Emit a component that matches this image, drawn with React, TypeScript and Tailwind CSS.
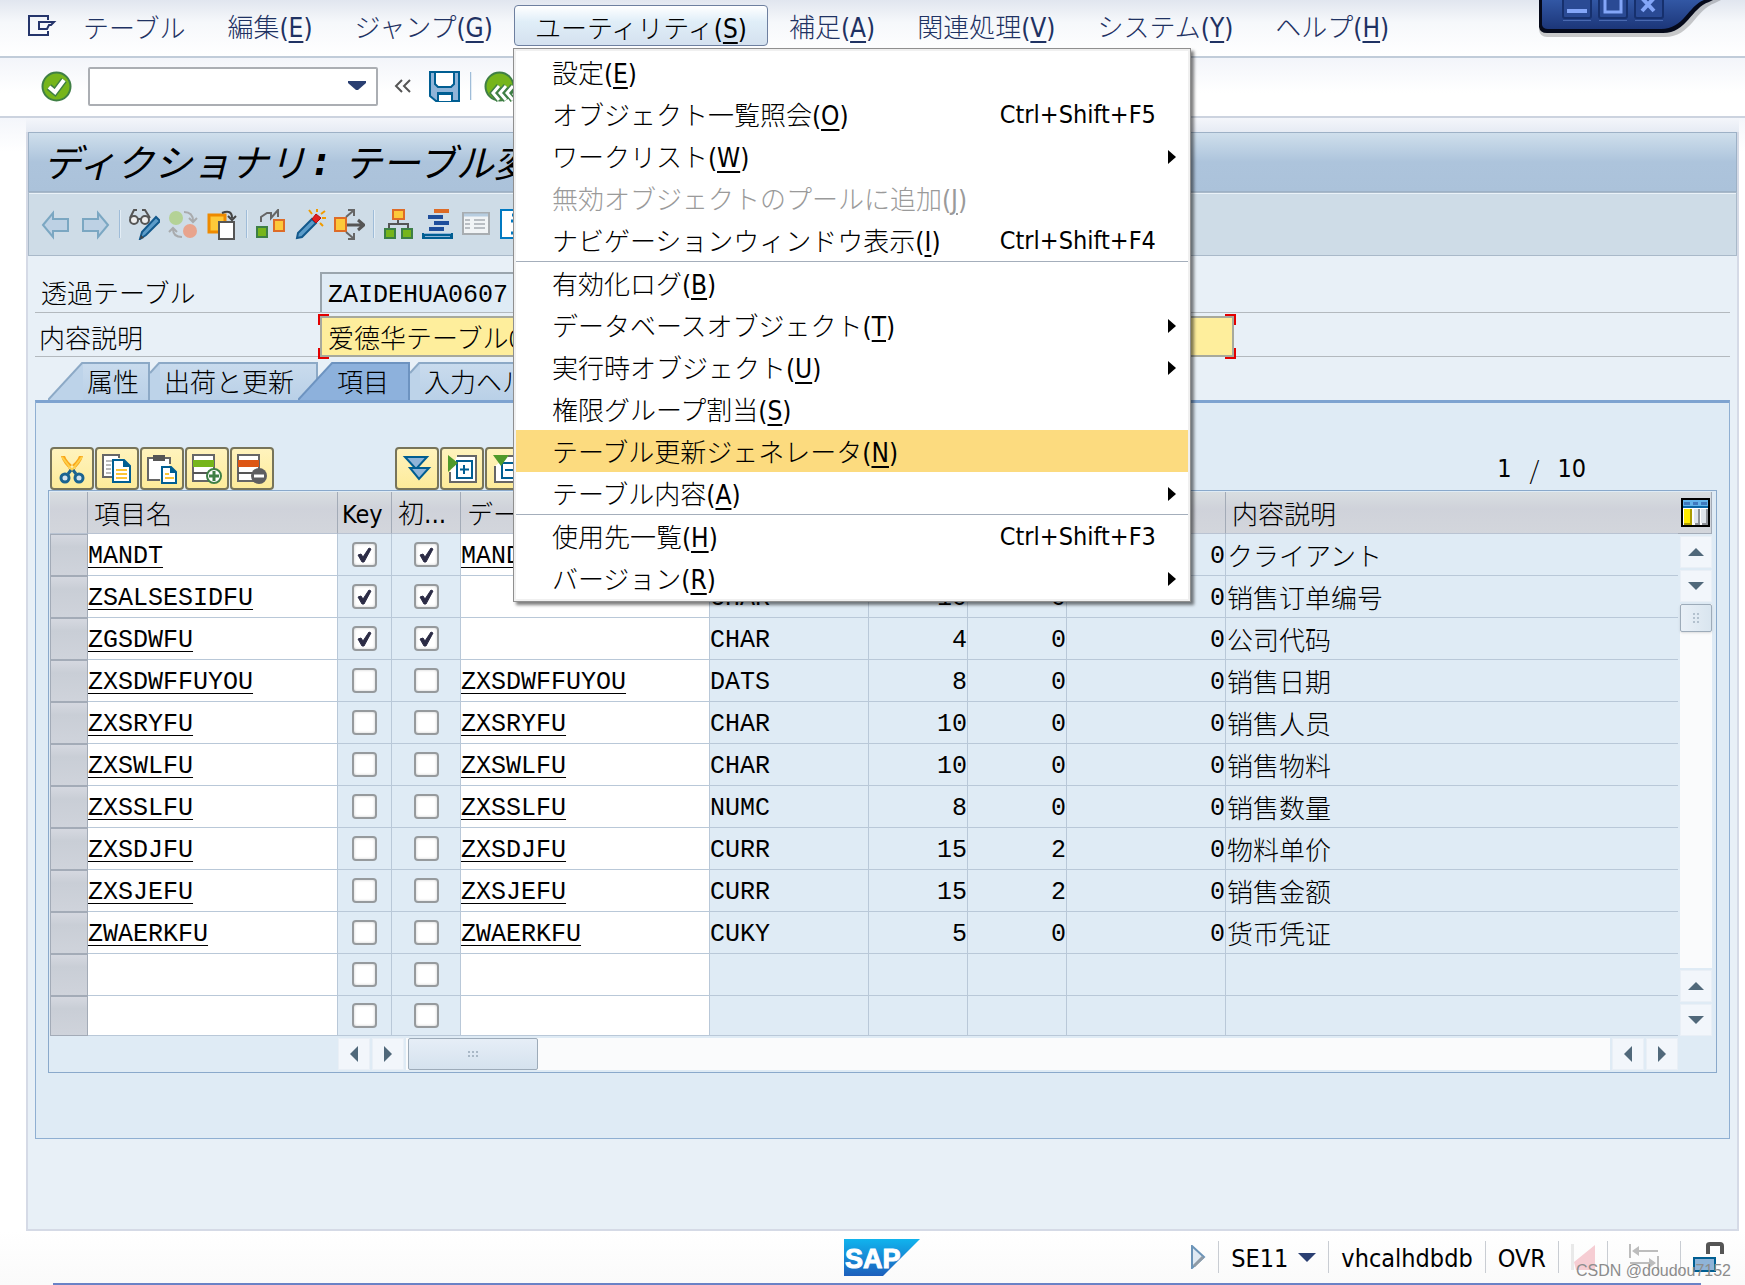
import { useState, type ReactNode } from 'react';
import clsx from 'clsx';

type MenuEntry = {
    label: string;
    hotkey: string;
    shortcut?: string;
    submenu?: boolean;
    disabled?: boolean;
    active?: boolean;
};

type Field = {
    name: string;
    key: boolean;
    element: string;
    type: string;
    length: string;
    decimals: string;
    coord: string;
    text: string;
};

const menuLeft = [
    { label: 'テーブル', hotkey: '' },
    { label: '編集', hotkey: 'E' },
    { label: 'ジャンプ', hotkey: 'G' },
];

const menuRight = [
    { label: '補足', hotkey: 'A' },
    { label: '関連処理', hotkey: 'V' },
    { label: 'システム', hotkey: 'Y' },
    { label: 'ヘルプ', hotkey: 'H' },
];

const utilityMenu: MenuEntry[][] = [
    [
        { label: '設定', hotkey: 'E' },
        { label: 'オブジェクト一覧照会', hotkey: 'O', shortcut: 'Ctrl+Shift+F5' },
        { label: 'ワークリスト', hotkey: 'W', submenu: true },
        { label: '無効オブジェクトのプールに追加', hotkey: 'J', disabled: true },
        { label: 'ナビゲーションウィンドウ表示', hotkey: 'I', shortcut: 'Ctrl+Shift+F4' },
    ],
    [
        { label: '有効化ログ', hotkey: 'B' },
        { label: 'データベースオブジェクト', hotkey: 'T', submenu: true },
        { label: '実行時オブジェクト', hotkey: 'U', submenu: true },
        { label: '権限グループ割当', hotkey: 'S' },
        { label: 'テーブル更新ジェネレータ', hotkey: 'N', active: true },
        { label: 'テーブル内容', hotkey: 'A', submenu: true },
    ],
    [
        { label: '使用先一覧', hotkey: 'H', shortcut: 'Ctrl+Shift+F3' },
        { label: 'バージョン', hotkey: 'R', submenu: true },
    ],
];

const fields: Field[] = [
    { name: 'MANDT', key: true, element: 'MANDT', type: 'CLNT', length: '3', decimals: '0', coord: '0', text: 'クライアント' },
    { name: 'ZSALSESIDFU', key: true, element: '', type: 'CHAR', length: '10', decimals: '0', coord: '0', text: '销售订单编号' },
    { name: 'ZGSDWFU', key: true, element: '', type: 'CHAR', length: '4', decimals: '0', coord: '0', text: '公司代码' },
    { name: 'ZXSDWFFUYOU', key: false, element: 'ZXSDWFFUYOU', type: 'DATS', length: '8', decimals: '0', coord: '0', text: '销售日期' },
    { name: 'ZXSRYFU', key: false, element: 'ZXSRYFU', type: 'CHAR', length: '10', decimals: '0', coord: '0', text: '销售人员' },
    { name: 'ZXSWLFU', key: false, element: 'ZXSWLFU', type: 'CHAR', length: '10', decimals: '0', coord: '0', text: '销售物料' },
    { name: 'ZXSSLFU', key: false, element: 'ZXSSLFU', type: 'NUMC', length: '8', decimals: '0', coord: '0', text: '销售数量' },
    { name: 'ZXSDJFU', key: false, element: 'ZXSDJFU', type: 'CURR', length: '15', decimals: '2', coord: '0', text: '物料单价' },
    { name: 'ZXSJEFU', key: false, element: 'ZXSJEFU', type: 'CURR', length: '15', decimals: '2', coord: '0', text: '销售金额' },
    { name: 'ZWAERKFU', key: false, element: 'ZWAERKFU', type: 'CUKY', length: '5', decimals: '0', coord: '0', text: '货币凭证' },
    { name: '', key: false, element: '', type: '', length: '', decimals: '', coord: '', text: '' },
    { name: '', key: false, element: '', type: '', length: '', decimals: '', coord: '', text: '' },
];

// Latin text is set a little heavier than the kana around it
const latin = "font-['DejaVu_Sans_Condensed','Noto_Sans',sans-serif] font-normal";

function MenuLabel({ label, hotkey }: { label: string; hotkey: string }) {
    return (
        <span className="whitespace-nowrap">
            {label}
            {hotkey && (
                <span className={latin}>
                    (<span className="underline decoration-2 underline-offset-4">{hotkey}</span>)
                </span>
            )}
        </span>
    );
}

function IconButton({ label, children }: { label: string; children: ReactNode }) {
    return (
        <button aria-label={label} className="shrink-0">
            <svg width="31" height="31" viewBox="0 0 31 31" fill="none">
                {children}
            </svg>
        </button>
    );
}

function GridButton({ label, children }: { label: string; children: ReactNode }) {
    return (
        <button
            aria-label={label}
            className="flex h-[43px] w-11 shrink-0 items-center justify-center rounded-sm border-2 border-[#77745a] bg-linear-to-b from-[#fff3bd] to-[#fdeb9a]"
        >
            <svg width="30" height="30" viewBox="0 0 30 30" fill="none">
                {children}
            </svg>
        </button>
    );
}

function Divider() {
    return <span className="h-7 w-0.5 shrink-0 border-r border-[#e3edf5] bg-[#9fbcd8]" />;
}

function StatusDivider() {
    return <span className="h-8 w-px shrink-0 bg-[#c9cdd3]" />;
}

const arrowPaths = {
    up: 'M8 2 L16 10 H0 Z',
    down: 'M8 10 L16 2 H0 Z',
    left: 'M4 6 L12 -2 V14 Z',
    right: 'M12 6 L4 -2 V14 Z',
};

function ScrollButton({ dir, className }: { dir: keyof typeof arrowPaths; className?: string }) {
    return (
        <button
            aria-label={`scroll ${dir}`}
            className={clsx('flex h-8 w-8 shrink-0 items-center justify-center border border-[#e9eff6] bg-[#f2f6fb]', className)}
        >
            <svg width="16" height="12" viewBox="0 0 16 12" overflow="visible">
                <path d={arrowPaths[dir]} fill="#50687a" />
            </svg>
        </button>
    );
}

function WindowControls() {
    return (
        <svg className="absolute top-0 right-3.5 h-10 w-48" viewBox="0 0 192 40" fill="none">
            <defs>
                <linearGradient id="wc" x1="0" y1="0" x2="0" y2="1">
                    <stop offset="0" stopColor="#3257a4" />
                    <stop offset="1" stopColor="#1c3679" />
                </linearGradient>
            </defs>
            <path d="M0 0V30Q1 37 8 37H126C152 37 156 10 176 3L182 0Z" fill="#000" opacity="0.2" />
            <path d="M0 0V27Q1 33 8 33H124C148 33 152 8 170 2L174 0Z" fill="#05091a" />
            <path d="M3 0V25Q4 29 9 29H122C145 29 149 6 165 0Z" fill="url(#wc)" />
            <g fill="#2a4a94" stroke="#16306d" strokeWidth="2">
                <path d="M24-2h28v18q0 2-2 2H26q-2 0-2-2Z" />
                <path d="M60-2h28v18q0 2-2 2H62q-2 0-2-2Z" />
                <path d="M96-2h28v18q0 2-2 2H98q-2 0-2-2Z" />
            </g>
            <path d="M24 20.500h28M60 20.500h28M96 20.500h28" stroke="#4a69b0" />
            <rect x="28" y="9" width="20" height="4" fill="#84a6f8" />
            <path d="M66-2V12H82V-2" stroke="#84a6f8" strokeWidth="3" />
            <path d="M103 11L115-2M103-2L115 11" stroke="#84a6f8" strokeWidth="4" />
        </svg>
    );
}

function UtilityMenu() {
    return (
        <div
            role="menu"
            className="absolute top-[43px] -left-px z-20 w-[678px] border border-[#8f8f8f] bg-white p-0.5 text-black shadow-[3px_3px_3px_#00000080] ring-2 ring-[#f0f0f0] ring-inset"
        >
            {utilityMenu.map((group, i) => (
                <div key={i} className={clsx(i > 0 && 'border-t border-[#a4aebb]')}>
                    {group.map((item) => (
                        <button
                            key={item.label}
                            role="menuitem"
                            disabled={item.disabled}
                            className={clsx(
                                'flex h-[42px] w-full items-center pt-0.5 pr-3 pl-9 text-left',
                                item.active && 'bg-[#fcdb7f]',
                                item.disabled && 'text-[#9a9a9a]',
                            )}
                        >
                            <MenuLabel label={item.label} hotkey={item.hotkey} />
                            {item.shortcut && <span className={clsx(latin, 'mr-5 ml-auto text-[25px]')}>{item.shortcut}</span>}
                            {item.submenu && (
                                <svg className="ml-auto" width="8" height="14" viewBox="0 0 8 14">
                                    <path d="M0 0L8 7L0 14Z" fill="#000" />
                                </svg>
                            )}
                        </button>
                    ))}
                </div>
            ))}
        </div>
    );
}

function MenuBar() {
    return (
        <nav className="relative flex h-[58px] items-start border-b-2 border-[#c1ccd9] bg-linear-to-b from-[#e1e6ef] via-[#f6f8fb] via-40% to-white pt-[5px] pl-[27px] text-[#1f3263]">
            <button aria-label="システムメニュー" className="flex h-[41px] w-[35px] items-center">
                <svg width="31" height="24" viewBox="0 0 31 24" fill="none" stroke="#25356b" strokeWidth="2">
                    <path d="M21 6V2H2V21H21V17" />
                    <path d="M12 8H27L24 11H22L20 15H12Z" />
                </svg>
            </button>
            {menuLeft.map((item) => (
                <button key={item.label} className="h-[41px] px-[21px] pt-1">
                    <MenuLabel {...item} />
                </button>
            ))}
            <div className="relative">
                <button
                    aria-haspopup="menu"
                    aria-expanded="true"
                    className="h-[41px] rounded-sm border border-[#6d7f9f] bg-linear-to-b from-white via-[#e0eef8] via-40% to-[#d4e1ef] px-5 pt-1 text-black"
                >
                    <MenuLabel label="ユーティリティ" hotkey="S" />
                </button>
                <UtilityMenu />
            </div>
            {menuRight.map((item) => (
                <button key={item.label} className="h-[41px] px-[21px] pt-1">
                    <MenuLabel {...item} />
                </button>
            ))}
            <WindowControls />
        </nav>
    );
}

function CommandBar() {
    return (
        <div className="flex h-[60px] items-center border-b-2 border-[#ccd3df] bg-linear-to-b from-[#f3f5fa] to-white to-60% pb-0.5 pl-[41px]">
            <IconButton label="入力">
                <circle cx="15.500" cy="15.500" r="14" fill="#76b51b" stroke="#3f7f45" strokeWidth="2" />
                <path d="M8 16L14 21L23 9" stroke="#3f7f45" strokeWidth="7" />
                <path d="M8 16L14 21L23 9" stroke="#fff" strokeWidth="4" />
            </IconButton>
            <div className="relative ml-4 h-[39px] w-[290px]">
                <input
                    aria-label="コマンド"
                    className="h-full w-full rounded-xs border-2 border-[#abaeb3] bg-white px-2 outline-none"
                />
                <svg className="absolute top-3.5 right-3" width="18" height="10" viewBox="0 0 18 10">
                    <path d="M0 0H18V2L10 9H8L0 2Z" fill="#2a3f72" />
                </svg>
            </div>
            <button aria-label="折りたたみ" className="ml-4">
                <svg width="17" height="14" viewBox="0 0 17 14" fill="none" stroke="#555" strokeWidth="2">
                    <path d="M8 1L2 7L8 13M16 1L10 7L16 13" />
                </svg>
            </button>
            <span className="mr-2.5 ml-[18px] flex">
                <IconButton label="保存">
                    <path d="M1 1H30V30H7L1 25Z" fill="#8fb4d8" stroke="#005e92" strokeWidth="2" />
                    <path d="M6 1H25V13L22 16H9L6 13Z" fill="#fff" stroke="#005e92" strokeWidth="2" />
                    <path d="M8 30V21H24V30Z" fill="#005e92" />
                    <rect x="10" y="24" width="12" height="6" fill="#fff" />
                </IconButton>
            </span>
            <Divider />
            <span className="ml-3 flex">
                <IconButton label="戻る">
                    <circle cx="15.500" cy="15.500" r="14" fill="#76b51b" stroke="#3f7f45" strokeWidth="2" />
                    <path d="M15 15L9 22L15 29M22 15L16 22L22 29M29 15L23 22L29 29" stroke="#3f7f45" strokeWidth="6" />
                    <path d="M15 15L9 22L15 29M22 15L16 22L22 29M29 15L23 22L29 29" stroke="#fff" strokeWidth="3" />
                </IconButton>
            </span>
        </div>
    );
}

function AppToolbar() {
    return (
        <div className="flex h-16 items-center gap-2 border border-[#a9b9c9] bg-[#cedce7] pl-3 shadow-[inset_0_1px_0_#eaf2f8]">
            <IconButton label="前へ">
                <path d="M2 16L12 4V10H27V22H12V28Z" fill="#bdd1e4" stroke="#7ba7c2" strokeWidth="2" />
            </IconButton>
            <IconButton label="次へ">
                <path d="M28 16L18 4V10H3V22H18V28Z" fill="#bdd1e4" stroke="#7ba7c2" strokeWidth="2" />
            </IconButton>
            <Divider />
            <IconButton label="照会 &lt;-&gt; 変更">
                <path d="M1 9L5 1H8M21 9L16 1H13" stroke="#555" strokeWidth="2" />
                <circle cx="5" cy="11" r="4" fill="#eee" stroke="#555" strokeWidth="2" />
                <circle cx="16" cy="11" r="4" fill="#eee" stroke="#555" strokeWidth="2" />
                <path d="M9 10H12" stroke="#555" strokeWidth="2" />
                <path d="M11 30L13 23L27 8L31 12L17 26Z" fill="#5c9cc9" stroke="#13598c" strokeWidth="2" />
                <path d="M11 30L12 26L15 29Z" fill="#444" />
            </IconButton>
            <IconButton label="有効 &lt;-&gt; 無効">
                <circle cx="8" cy="9" r="7" fill="#b4d296" />
                <circle cx="22" cy="22" r="7" fill="#e8a48d" />
                <path d="M16 3Q25 3 25 12M21 9L25 13L29 9" stroke="#a9abad" strokeWidth="2" />
                <path d="M14 28Q5 28 5 20M1 23L5 19L9 23" stroke="#a9abad" strokeWidth="2" />
            </IconButton>
            <IconButton label="他のオブジェクト">
                <path d="M2 6H18V23H2Z" fill="#fdc93a" stroke="#ee8a00" strokeWidth="3" />
                <rect x="12" y="13" width="15" height="17" fill="#fff" stroke="#555" strokeWidth="2" />
                <path d="M15 4Q25 0 25 9M21 7L25 11L29 7" stroke="#444" strokeWidth="2" />
            </IconButton>
            <Divider />
            <IconButton label="チェック">
                <rect x="1" y="18" width="10" height="10" fill="#76b51b" stroke="#3d7f45" strokeWidth="2" />
                <rect x="18" y="11" width="10" height="11" fill="#fdc93a" stroke="#de6c27" strokeWidth="2" />
                <path d="M5 13V8L11 4H15V9L22 1V8" stroke="#666" strokeWidth="2" />
            </IconButton>
            <IconButton label="有効化">
                <path d="M2 29L3 24L17 10L21 14L7 28Z" fill="#5c9cc9" stroke="#13598c" strokeWidth="2" />
                <path d="M17 10L21 5L26 9L21 14Z" fill="#e02020" stroke="#b80d0d" />
                <path d="M14 1L17 5M22 0V3M30 2L26 5M27 9H31M25 14L28 17" stroke="#f09b00" strokeWidth="2" />
            </IconButton>
            <IconButton label="使用先一覧">
                <rect x="1" y="9" width="11" height="13" fill="#fdc93a" stroke="#de6c27" strokeWidth="2" />
                <path d="M13 16H29M24 11L30 16L24 21" stroke="#555" strokeWidth="3" />
                <path d="M12 8L19 2M14 1H20V7M12 23L19 29M14 30H20V24" stroke="#666" strokeWidth="2" />
            </IconButton>
            <Divider />
            <IconButton label="階層表示">
                <path d="M15 10V15M6 20V15H25V20" stroke="#555" strokeWidth="2" />
                <rect x="10" y="1" width="11" height="9" fill="#fdc93a" stroke="#de6c27" strokeWidth="2" />
                <rect x="2" y="20" width="10" height="9" fill="#76b51b" stroke="#3d7f45" strokeWidth="2" />
                <rect x="19" y="20" width="10" height="9" fill="#76b51b" stroke="#3d7f45" strokeWidth="2" />
            </IconButton>
            <IconButton label="アペンド構造">
                <path d="M12 2H27" stroke="#de6c27" strokeWidth="4" />
                <path d="M6 8H21M12 14H27M7 20H22" stroke="#1f4e9b" strokeWidth="4" />
                <path d="M1 24V29H30V24" fill="#8fb4d8" stroke="#005e92" strokeWidth="2" />
                <path d="M2 26H29V29H2Z" fill="#8fb4d8" stroke="#005e92" strokeWidth="2" />
            </IconButton>
            <IconButton label="内容">
                <rect x="2" y="4" width="26" height="21" fill="#f1f4f6" stroke="#a8adb1" strokeWidth="2" />
                <path d="M3 6H27" stroke="#b7cde0" strokeWidth="3" />
                <path d="M4 11H9M4 15H9M4 19H9M13 11H24M13 15H24M13 19H24" stroke="#b9bec3" strokeWidth="2" />
            </IconButton>
            <IconButton label="情報">
                <rect x="1" y="1" width="29" height="28" fill="#fff" stroke="#0079c1" strokeWidth="2" />
                <path d="M11 12H16V24M11 24H21M12 6H17" stroke="#0079c1" strokeWidth="3" />
            </IconButton>
        </div>
    );
}

function Tab({ label, active, slant, className }: { label: string; active?: boolean; slant: 'wide' | 'small'; className: string }) {
    const fill = active ? '#8db1dc' : '#bdd3e9';
    return (
        <button role="tab" aria-selected={!!active} className={clsx('flex h-[38px] shrink-0', active && 'z-10 -ml-5')}>
            {slant === 'wide' ? (
                <svg width="35" height="38" viewBox="0 0 35 38">
                    <path d="M0 38L35 0V38Z" fill={fill} />
                    <path d="M0 38L35 0" stroke={active ? '#6d93c0' : '#8ca9c6'} strokeWidth="2" />
                </svg>
            ) : (
                <svg width="10" height="38" viewBox="0 0 10 38">
                    <path d="M0 11L10 0V38H0Z" fill={fill} />
                    <path d="M0 11L10 0" stroke="#8ca9c6" strokeWidth="2" />
                </svg>
            )}
            <span
                className={clsx(
                    'h-[38px] border-t-2 border-r-2 pl-1 text-left whitespace-nowrap',
                    active
                        ? 'border-[#6d93c0] bg-[#8db1dc]'
                        : 'border-[#8ca9c6] bg-linear-to-b from-[#c9dbed] to-[#b9d0e7]',
                    className,
                )}
            >
                {label}
            </span>
        </button>
    );
}

function CheckCell({ label, checked }: { label: string; checked: boolean }) {
    const [on, setOn] = useState(checked);
    return (
        <td className="border-r border-b border-[#b9c8d8] p-0">
            <label className="relative mx-auto block h-[25px] w-[25px]">
                <input
                    type="checkbox"
                    aria-label={label}
                    checked={on}
                    onChange={() => setOn(!on)}
                    className="block h-[25px] w-[25px] appearance-none rounded-sm border-2 border-[#969a9d] bg-white shadow-[inset_0_0_3px_#00000033]"
                />
                {on && (
                    <svg className="pointer-events-none absolute inset-0" width="25" height="25" viewBox="0 0 25 25">
                        <path d="M6 13L9 12L11 15L17 6L19 7L12 20H10Z" fill="#2b2b45" stroke="#2b2b45" />
                    </svg>
                )}
            </label>
        </td>
    );
}

const headCell = 'border-r border-b border-r-[#a3abb7] border-b-[#b9c3d2] p-0 pt-0.5 pl-1.5 text-left font-light whitespace-nowrap';
const monoCell = "border-r border-b border-[#b9c8d8] p-0 pt-1 font-['Liberation_Mono','Noto_Sans_CJK_JP',monospace] text-[25px]";

function FieldTable() {
    return (
        <table className="w-full table-fixed border-separate border-spacing-0">
            <colgroup>
                <col className="w-[38px]" />
                <col className="w-[250px]" />
                <col className="w-[54px]" />
                <col className="w-[69px]" />
                <col className="w-[249px]" />
                <col className="w-[159px]" />
                <col className="w-[99px]" />
                <col className="w-[99px]" />
                <col className="w-[159px]" />
                <col />
            </colgroup>
            <thead>
                <tr className="h-[42px] bg-linear-to-b from-[#d9dee1] via-[#cfd2da] via-40% to-[#d3d6dc]">
                    <th className={headCell} aria-label="選択" />
                    <th className={headCell}>項目名</th>
                    <th className="border-r border-b border-r-[#a3abb7] border-b-[#b9c3d2] p-0 pt-0.5 pl-1 text-left font-light">
                        <span className={clsx(latin, 'text-[25px]')}>Key</span>
                    </th>
                    <th className={headCell}>
                        初<span className={latin}>...</span>
                    </th>
                    <th className={headCell}>データエレメント</th>
                    <th className={headCell}>データ型</th>
                    <th className={headCell}>長さ</th>
                    <th className={headCell}>小数点</th>
                    <th className={headCell}>座標</th>
                    <th className="border-b border-[#b9c3d2] p-0 pt-0.5 pl-1.5 text-left font-light">内容説明</th>
                </tr>
            </thead>
            <tbody>
                {fields.map((field, i) => (
                    <tr key={i} className={i === fields.length - 1 ? 'h-10' : 'h-[42px]'}>
                        <td className="border border-[#a3abb7] bg-linear-to-b from-[#d5d8e0] via-[#c9ced6] via-30% to-[#cfd3db] p-0" />
                        <td className={clsx(monoCell, 'bg-white')}>
                            {field.name && (
                                <a href={`#${field.name}`} className="underline decoration-1 underline-offset-4">
                                    {field.name}
                                </a>
                            )}
                        </td>
                        <CheckCell label={`Key ${i + 1}`} checked={field.key} />
                        <CheckCell label={`初期値 ${i + 1}`} checked={field.key} />
                        <td className={clsx(monoCell, 'bg-white')}>
                            {field.element && (
                                <a href={`#${field.element}`} className="underline decoration-1 underline-offset-4">
                                    {field.element}
                                </a>
                            )}
                        </td>
                        <td className={monoCell}>{field.type}</td>
                        <td className={clsx(monoCell, 'text-right')}>{field.length}</td>
                        <td className={clsx(monoCell, 'text-right')}>{field.decimals}</td>
                        <td className={clsx(monoCell, 'text-right')}>{field.coord}</td>
                        <td className="border-b border-[#b9c8d8] p-0 pl-px font-['Noto_Sans_CJK_SC','Noto_Sans_CJK_JP',sans-serif]">
                            {field.text}
                        </td>
                    </tr>
                ))}
            </tbody>
        </table>
    );
}

function GridToolbar() {
    return (
        <div className="flex items-center gap-px pr-[131px]">
            <GridButton label="切取">
                <path d="M4 2Q6 10 16 18L19 14Q10 8 8 2ZM26 2Q24 10 14 18L11 14Q20 8 22 2Z" fill="#f9a61a" />
                <path d="M5 3L15 16M25 3L15 16" stroke="#fdd04a" strokeWidth="2" />
                <circle cx="8" cy="24" r="4" fill="#d3e2ee" stroke="#1b6390" strokeWidth="3" />
                <circle cx="22" cy="24" r="4" fill="#d3e2ee" stroke="#1b6390" strokeWidth="3" />
                <path d="M11 20L14 16M19 20L16 16" stroke="#1b6390" strokeWidth="3" />
            </GridButton>
            <GridButton label="コピー">
                <path d="M12 23H1V1H17V4" fill="#fff" stroke="#666" strokeWidth="2" />
                <path d="M4 7H10M4 11H9M4 15H9M4 19H9" stroke="#bbb" strokeWidth="2" />
                <path d="M11 6H22L28 12V28H11Z" fill="#fff" stroke="#005e92" strokeWidth="2" />
                <path d="M21 5V13H29Z" fill="#005e92" />
                <path d="M14 16H25M14 20H25M14 24H25" stroke="#fcc536" strokeWidth="2" />
            </GridButton>
            <GridButton label="貼付">
                <path d="M13 26H1V4H23V10" fill="#fff" stroke="#666" strokeWidth="2" />
                <path d="M6 1H18V7H6Z" fill="#555" />
                <path d="M15 13H24L29 18V29H15Z" fill="#fff" stroke="#005e92" strokeWidth="2" />
                <path d="M23 12V19H30Z" fill="#005e92" />
                <path d="M18 20H22M18 24H27" stroke="#fcc536" strokeWidth="2" />
            </GridButton>
            <GridButton label="行挿入">
                <path d="M1 1H22V27H1Z" fill="#fff" stroke="#666" strokeWidth="2" />
                <path d="M1 6H22V13H1Z" fill="#76b51b" />
                <path d="M1 19H22" stroke="#555" strokeWidth="2" />
                <circle cx="22" cy="22" r="7" fill="#fff" stroke="#3f7f45" strokeWidth="2" />
                <path d="M22 17V27M17 22H27" stroke="#3f7f45" strokeWidth="3" />
            </GridButton>
            <GridButton label="行削除">
                <path d="M1 1H22V27H1Z" fill="#fff" stroke="#666" strokeWidth="2" />
                <path d="M1 6H22V13H1Z" fill="#dd5614" />
                <path d="M1 19H22" stroke="#555" strokeWidth="2" />
                <circle cx="22" cy="22" r="8" fill="#5d5d60" />
                <path d="M17 22H27" stroke="#fff" strokeWidth="3" />
            </GridButton>
            <span className="w-[119px]" />
            <GridButton label="展開">
                <path d="M3 3H25L14 15Z" fill="#8fb4d8" stroke="#005e92" strokeWidth="2" />
                <path d="M8 14H27L17 25Z" fill="#8fb4d8" stroke="#005e92" strokeWidth="2" />
            </GridButton>
            <GridButton label="追加">
                <path d="M10 2H29V28H3V18" fill="#fff" stroke="#666" strokeWidth="2" />
                <rect x="10" y="7" width="15" height="17" fill="#fff" stroke="#005e92" strokeWidth="2" />
                <path d="M17 11V20M13 15.500H22" stroke="#005e92" strokeWidth="2" />
                <path d="M1 1L11 9L1 18Z" fill="#4f9a2a" />
            </GridButton>
            <GridButton label="解除">
                <path d="M16 2H29V28H3V12" fill="#fff" stroke="#666" strokeWidth="2" />
                <rect x="10" y="9" width="15" height="15" fill="#fff" stroke="#005e92" strokeWidth="2" />
                <path d="M13 16H22" stroke="#005e92" strokeWidth="2" />
                <path d="M1 1H17L9 12Z" fill="#4f9a2a" />
            </GridButton>
            <div className={clsx(latin, 'ml-auto flex gap-[18px] text-[25px]')}>
                <span>1</span>
                <span className="font-['Noto_Sans_CJK_JP',sans-serif] font-light">/</span>
                <span>10</span>
            </div>
        </div>
    );
}

function FieldGrid() {
    return (
        <div className="border border-[#8aa9cb] pt-px pr-1 pb-0.5 pl-px">
            <div className="flex">
                <div className="min-w-0 flex-1">
                    <FieldTable />
                </div>
                <div className="flex w-[34px] shrink-0 flex-col gap-0.5">
                    <button
                        aria-label="テーブル設定"
                        className="flex h-[42px] items-center justify-end border-r border-b border-[#a3abb7] bg-linear-to-b from-[#d9dee1] via-[#cfd2da] via-40% to-[#d3d6dc] pr-px"
                    >
                        <svg width="29" height="29" viewBox="0 0 29 29">
                            <path d="M0 0H29V29H0Z" fill="#000" />
                            <path d="M2 2H27V27H2Z" fill="#fff" />
                            <path d="M2 2H27V10H2Z" fill="#63b3ea" />
                            <path d="M3 4H9V7H3ZM12 4H17V7H12ZM20 4H26V7H20Z" fill="#3f78bd" />
                            <path d="M2 8H27V10H2Z" fill="#0a64a4" />
                            <path d="M3 11H9V25H3Z" fill="#ffea00" />
                            <path d="M9 11H11V27H3V25H9ZM3 25H9V27H3Z" fill="#ab9c00" />
                            <path d="M13 11H17V25H13ZM20 11H25V25H20Z" fill="#dfe5ec" />
                            <path d="M17 11H19V27H14V25H17ZM25 11H27V27H21V25H25Z" fill="#8e9298" />
                        </svg>
                    </button>
                    <ScrollButton dir="up" className="ml-0.5" />
                    <ScrollButton dir="down" className="ml-0.5" />
                    <div className="ml-0.5 w-8 flex-1 bg-[#fafbfc]">
                        <div className="flex h-7 items-center justify-center rounded-xs border border-[#9dabb9] bg-linear-to-r from-[#e9f0f7] to-[#d9e5ef] shadow-sm">
                            <span className="grid grid-cols-2 gap-0.5">
                                {[0, 1, 2, 3, 4, 5].map((n) => (
                                    <i key={n} className="h-0.5 w-0.5 bg-[#b3c1ce]" />
                                ))}
                            </span>
                        </div>
                    </div>
                    <ScrollButton dir="up" className="ml-0.5" />
                    <ScrollButton dir="down" className="ml-0.5" />
                </div>
            </div>
            <div className="mt-0.5 mr-[34px] ml-72 flex h-8 gap-0.5">
                <ScrollButton dir="left" />
                <ScrollButton dir="right" />
                <div className="flex-1 bg-[#fafbfc] pl-0.5">
                    <div className="flex h-8 w-[130px] items-center justify-center rounded-xs border border-[#9dabb9] bg-linear-to-b from-[#e6eef7] to-[#d5e2ee]">
                        <span className="grid grid-cols-3 gap-0.5">
                            {[0, 1, 2, 3, 4, 5].map((n) => (
                                <i key={n} className="h-0.5 w-0.5 bg-[#a9b8c6]" />
                            ))}
                        </span>
                    </div>
                </div>
                <ScrollButton dir="left" />
                <ScrollButton dir="right" />
            </div>
        </div>
    );
}

function StatusBar() {
    return (
        <footer className="relative flex h-[54px] items-center bg-linear-to-b from-white to-[#fafafa] pr-5 pb-0.5">
            <div className="flex flex-1 justify-end">
                <svg width="76" height="37" viewBox="0 0 76 37" role="img" aria-label="SAP">
                    <defs>
                        <linearGradient id="sap" x1="0" y1="0" x2="0" y2="1">
                            <stop offset="0" stopColor="#10b4ee" />
                            <stop offset="1" stopColor="#1d5fbc" />
                        </linearGradient>
                    </defs>
                    <path d="M0 0H76L39 37H0Z" fill="url(#sap)" />
                    <text
                        x="1"
                        y="29"
                        fill="#fff"
                        stroke="#fff"
                        fontFamily="Liberation Sans, sans-serif"
                        fontWeight="700"
                        fontSize="27"
                    >
                        SAP
                    </text>
                </svg>
            </div>
            <div className={clsx(latin, 'flex w-[805px] shrink-0 items-center justify-end gap-3 text-[25px]')}>
                <svg width="15" height="24" viewBox="0 0 15 24" fill="none">
                    <path d="M1 1L13 12L1 23Z" fill="#dfe9f3" stroke="#6c94b8" strokeWidth="2" />
                    <path d="M3 21L12 12" stroke="#8f9aa5" strokeWidth="3" />
                </svg>
                <StatusDivider />
                <button className="flex items-center gap-2.5">
                    <span className="pt-1">SE11</span>
                    <svg width="18" height="9" viewBox="0 0 18 9">
                        <path d="M0 0H18L9 9Z" fill="#2a3f72" />
                    </svg>
                </button>
                <StatusDivider />
                <span className="pt-1">vhcalhdbdb</span>
                <StatusDivider />
                <span className="pt-1">OVR</span>
                <StatusDivider />
                <svg width="24" height="26" viewBox="0 0 24 26">
                    <path d="M0 0H3V26H0Z" fill="#e9e9e9" />
                    <path d="M3 18L24 1V26H5Z" fill="#f6cdd3" />
                </svg>
                <StatusDivider />
                <svg className="mx-2" width="32" height="26" viewBox="0 0 32 26" fill="none" stroke="#bdbdbd" strokeWidth="2">
                    <path d="M2 0V14M8 7H30M30 12V26M2 19H24" />
                    <path d="M4 7L11 2V12ZM28 19L21 14V24Z" fill="#bdbdbd" stroke="none" />
                </svg>
                <StatusDivider />
                <svg width="32" height="30" viewBox="0 0 32 30" fill="none">
                    <path d="M15 12V3Q15 2 17 2H27Q29 2 29 4V12" stroke="#555" strokeWidth="4" />
                    <path d="M1 16H22V29H1Z" fill="#8fb4d8" stroke="#005e92" strokeWidth="2" />
                </svg>
            </div>
            <span className="absolute right-3.5 bottom-1 font-['Liberation_Sans',sans-serif] text-base leading-5 font-normal text-[#8c8c8c]">
                CSDN @doudou7152
            </span>
            <span className="absolute right-11 bottom-0 left-[53px] h-0.5 bg-[#6a82c6]" />
        </footer>
    );
}

export default function App() {
    return (
        <div className="flex min-h-screen flex-col bg-white font-['Noto_Sans','Noto_Sans_CJK_JP',sans-serif] text-[26px] leading-9 font-light text-black">
            <MenuBar />
            <CommandBar />
            <main className="flex flex-1 flex-col bg-linear-to-b from-[#f4f6fb] to-white to-3% pr-1.5 pl-[26px]">
                <div className="h-3.5 bg-linear-to-b from-[#f4f6fb] to-[#e6ebf4]" />
                <div className="flex flex-1 flex-col border-x-2 border-b-2 border-[#d5dae6] bg-[#e8f0f7]">
                    <h1 className="flex h-[60px] items-center border border-[#9db1c6] bg-linear-to-b from-[#cfdfec] via-[#adc4dc] via-50% to-[#abc2da] pl-[14px] text-[38px] font-normal whitespace-nowrap italic">
                        ディクショナリ
                        <span className="mr-4 ml-2 font-['DejaVu_Sans_Condensed','Noto_Sans',sans-serif] font-bold">:</span>
                        テーブル変更
                    </h1>
                    <AppToolbar />
                    <div className="flex flex-1 flex-col px-[7px] pt-4">
                        <div className="flex h-[41px] items-center border-b border-[#b3b9be]">
                            <label htmlFor="table-name" className="w-[285px] shrink-0 pt-0.5 pl-1.5">
                                透過テーブル
                            </label>
                            <input
                                id="table-name"
                                readOnly
                                defaultValue="ZAIDEHUA0607"
                                className="h-10 w-[480px] border-t-2 border-l-2 border-[#9aa5ad] bg-[#dfebf5] pt-1 pl-1.5 font-['Liberation_Mono',monospace] text-[25px] outline-none"
                            />
                        </div>
                        <div className="mt-[3px] flex h-[41px] items-center border-b border-[#b3b9be]">
                            <label htmlFor="table-text" className="w-[285px] shrink-0 pt-1 pl-1">
                                内容説明
                            </label>
                            <div className="relative w-[914px]">
                                <input
                                    id="table-text"
                                    defaultValue="爱德华テーブル0607"
                                    className="block h-[41px] w-full border-2 border-[#a7a99c] bg-[#feee9c] pt-0.5 pl-1.5 outline-none"
                                />
                                <i className="absolute -top-0.5 -left-0.5 h-[11px] w-[11px] border-t-2 border-l-2 border-[#e30000]" />
                                <i className="absolute -bottom-0.5 -left-0.5 h-[11px] w-[11px] border-b-2 border-l-2 border-[#e30000]" />
                                <i className="absolute -top-0.5 -right-0.5 h-[11px] w-[11px] border-t-2 border-r-2 border-[#e30000]" />
                                <i className="absolute -right-0.5 -bottom-0.5 h-[11px] w-[11px] border-r-2 border-b-2 border-[#e30000]" />
                            </div>
                        </div>
                        <div role="tablist" className="mt-[5px] flex pl-[13px]">
                            <Tab label="属性" slant="wide" className="w-[67px]" />
                            <Tab label="出荷と更新" slant="small" className="w-[158px]" />
                            <Tab label="項目" slant="wide" active className="w-[77px]" />
                            <Tab label="入力ヘルプ/チェック" slant="small" className="w-[270px]" />
                            <Tab label="通貨/数量項目" slant="small" className="w-[200px]" />
                        </div>
                        <section className="mb-[90px] flex-1 border border-t-3 border-[#8fafd2] border-t-[#7ea3d0] bg-[#dfebf5] px-3 pt-11">
                            <div className="pl-0.5">
                                <GridToolbar />
                            </div>
                            <FieldGrid />
                        </section>
                    </div>
                </div>
            </main>
            <StatusBar />
        </div>
    );
}
